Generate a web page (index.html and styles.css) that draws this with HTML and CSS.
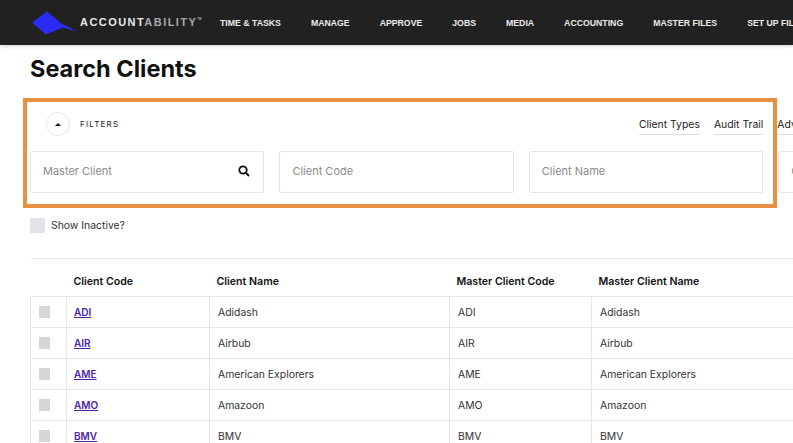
FILE: index.html
```html
<!DOCTYPE html>
<html lang="en">
<head>
<meta charset="utf-8">
<title>Search Clients</title>
<link rel="stylesheet" href="styles.css">
</head>
<body>
<header class="topbar">
  <a class="brand">
    <svg class="brand-mark" viewBox="0 0 46 24" width="46" height="24"><path fill="#2b2bf5" d="M2 11.500 17 0.500 32 13 38 15.500 46 20.500 33 16.500 16 23.500Z"/></svg>
    <span class="brand-name">ACCOUNT<span class="brand-light">ABILITY</span><sup class="tm">TM</sup></span>
  </a>
  <nav class="nav">
    <a>TIME &amp; TASKS</a><a>MANAGE</a><a>APPROVE</a><a>JOBS</a><a>MEDIA</a><a>ACCOUNTING</a><a>MASTER FILES</a><a>SET UP FILES</a>
  </nav>
</header>
<main class="page">
  <h1 class="title">Search Clients</h1>
  <section class="filters">
    <div class="highlight"></div>
    <div class="filters-head">
      <div class="toggle-wrap">
        <button class="toggle"><span class="caret"></span></button>
        <span class="filters-label">FILTERS</span>
      </div>
      <div class="links"><a>Client Types</a><a>Audit Trail</a><a>Advanced</a></div>
    </div>
    <div class="fields">
      <div class="field"><span>Master Client</span>
        <svg class="search" viewBox="0 0 12 12" width="12" height="12"><circle cx="5" cy="5" r="3.700" fill="none" stroke="#111" stroke-width="1.800"/><path d="M7.800 7.800 11 11" stroke="#111" stroke-width="2" fill="none"/></svg>
      </div>
      <div class="field"><span>Client Code</span></div>
      <div class="field"><span>Client Name</span></div>
      <div class="field"><span>Contact</span></div>
    </div>
  </section>
  <label class="inactive"><span class="check"></span>Show Inactive?</label>
  <table class="grid">
    <colgroup><col class="c1"><col class="c2"><col class="c3"><col class="c4"><col class="c5"></colgroup>
    <thead><tr><th></th><th>Client Code</th><th>Client Name</th><th>Master Client Code</th><th>Master Client Name</th></tr></thead>
    <tbody>
      <tr><td><span class="box"></span></td><td class="code-cell"><a class="code">ADI</a></td><td>Adidash</td><td>ADI</td><td>Adidash</td></tr>
      <tr><td><span class="box"></span></td><td class="code-cell"><a class="code">AIR</a></td><td>Airbub</td><td>AIR</td><td>Airbub</td></tr>
      <tr><td><span class="box"></span></td><td class="code-cell"><a class="code">AME</a></td><td>American Explorers</td><td>AME</td><td>American Explorers</td></tr>
      <tr><td><span class="box"></span></td><td class="code-cell"><a class="code">AMO</a></td><td>Amazoon</td><td>AMO</td><td>Amazoon</td></tr>
      <tr><td><span class="box"></span></td><td class="code-cell"><a class="code">BMV</a></td><td>BMV</td><td>BMV</td><td>BMV</td></tr>
    </tbody>
  </table>
</main>
</body>
</html>
```
FILE: styles.css
```css
* { box-sizing: border-box; }
html, body { height: 100%; }
body {
  margin: 0;
  overflow: hidden;
  background: #fff;
  color: #222;
  font-family: Inter, "Open Sans", sans-serif;
}
.topbar {
  display: flex;
  align-items: center;
  height: 45px;
  padding-left: 30px;
  background: #212121;
  box-shadow: 0 1px 4px rgba(0,0,0,.2);
  white-space: nowrap;
}
.brand { display: flex; align-items: center; width: 190px; flex: none; }
.brand-mark { flex: none; margin-top: 1px; }
.brand-name {
  margin-left: 4px;
  margin-top: -2px;
  font: bold 11px "Liberation Sans", sans-serif;
  letter-spacing: 1.450px;
  color: #e8e8e8;
}
.brand-light { color: #a9a9a9; }
.tm { font-size: 3px; vertical-align: 6px; letter-spacing: 0; color: #aaa; }
.nav { display: flex; gap: 30px; flex: none; }
.nav a {
  font: bold 8.730px "Liberation Sans", sans-serif;
  color: #ececec;
}
.page { width: 1000px; padding: 0 0 0 30px; }
.title {
  margin: 10px 0 0;
  height: 43px;
  font: 700 23.500px/28px Inter, sans-serif;
  color: #111;
}
.filters { position: relative; height: 110px; }
.highlight {
  position: absolute;
  left: -7px;
  top: 0;
  width: 754px;
  height: 110px;
  border: 4px solid #e8903f;
  pointer-events: none;
}
.filters-head {
  display: flex;
  justify-content: space-between;
  height: 53px;
  width: 797px;
  padding: 14px 0 0 16px;
}
.toggle-wrap { display: flex; align-items: flex-start; }
.toggle {
  display: flex;
  align-items: center;
  justify-content: center;
  width: 24px;
  height: 24px;
  padding: 0;
  border: 1px solid #e6e6e6;
  border-radius: 50%;
  background: #fff;
}
.caret {
  width: 0;
  height: 0;
  border-left: 3px solid transparent;
  border-right: 3px solid transparent;
  border-bottom: 3px solid #111;
}
.filters-label {
  margin: 7px 0 0 10px;
  font-size: 8px;
  line-height: 10px;
  letter-spacing: 1.200px;
  color: #222;
}
.links { display: flex; gap: 14px; padding-top: 6px; }
.links a {
  height: 17px;
  font-size: 10.400px;
  line-height: 14px;
  color: #222;
  border-bottom: 1px solid #ddd;
}
.fields { display: flex; gap: 15px; }
.field {
  display: flex;
  align-items: center;
  justify-content: space-between;
  flex: none;
  width: 234.400px;
  height: 42px;
  padding: 0 13px 2px 12px;
  border: 1px solid #e6e6e6;
  border-radius: 2px;
  font-size: 11px;
  color: #8a8a8a;
}
.inactive {
  display: flex;
  align-items: center;
  gap: 6px;
  height: 16px;
  margin-top: 9px;
  font-size: 10.400px;
  color: #333;
}
.check { width: 15px; height: 15px; background: #e1e3e8; }
.grid {
  width: 830px;
  margin-top: 25px;
  border-collapse: collapse;
  table-layout: fixed;
  border-top: 1px solid #e8e8e8;
  font-size: 10.400px;
}
.c1 { width: 36px; }
.c2 { width: 143px; }
.c3 { width: 240px; }
.c4 { width: 142px; }
th {
  height: 38px;
  padding: 8px 0 0 7px;
  text-align: left;
  font-weight: 600;
  font-size: 10.600px;
  color: #111;
  border-bottom: 1px solid #e6e6e6;
}
td {
  height: 31px;
  padding: 0 0 0 8px;
  color: #333;
  border: 1px solid #e6e6e6;
}
.code-cell { padding-left: 7px; }
.box { display: block; width: 11px; height: 12px; margin-top: -1px; background: #d6d6d6; }
.code { font-size: 10px; font-weight: 600; color: #4a25aa; text-decoration: underline; }
```
